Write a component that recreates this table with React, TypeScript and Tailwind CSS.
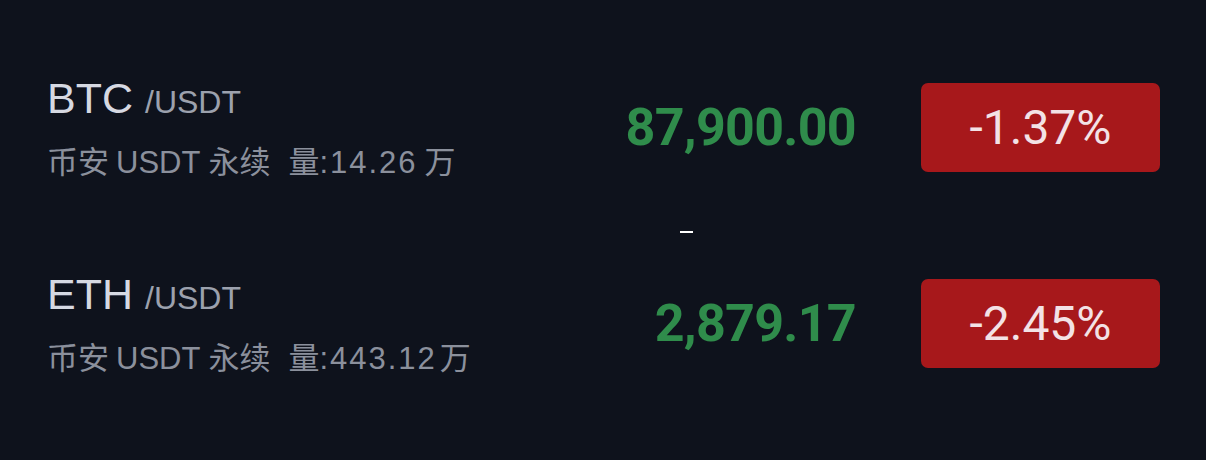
import React from "react";

type Ticker = {
  base: string;
  volume: string;
  unitGap: string;
  price: string;
  change: string;
};

const tickers: Ticker[] = [
  { base: "BTC", volume: "14.26", unitGap: "ml-[7px]", price: "87,900.00", change: "-1.37%" },
  { base: "ETH", volume: "443.12", unitGap: "ml-[3px]", price: "2,879.17", change: "-2.45%" },
];

const sans = "font-['Liberation_Sans','Noto_Sans_CJK_SC',sans-serif]";
const roboto = "font-['Roboto','Liberation_Sans',sans-serif]";

function TickerRow({ t }: { t: Ticker }) {
  return (
    <div className="flex items-center h-[101px]">
      {/* Pair + market info */}
      <div className={`flex flex-col ${sans}`}>
        <div className="flex items-baseline h-[43px]">
          <span className="text-[43px] leading-[43px] text-[#d6d9e2]">{t.base}</span>
          <span className="ml-[12px] text-[32px] leading-[30px] text-[#9ca1ad]">/USDT</span>
        </div>
        <div className="mt-[28px] h-[30px] flex items-baseline text-[31px] leading-[30px] text-[#8b909c] whitespace-nowrap">
          <span>币安</span>
          <span className="ml-[7px]">USDT</span>
          <span className="ml-[8px]">永续</span>
          <span className="ml-[18px]">量</span>
          <span className="tracking-[2px]">:{t.volume}</span>
          <span className={t.unitGap}>万</span>
        </div>
      </div>

      <div className="flex-1" />

      <span className={`${roboto} text-[52px] leading-none font-bold tracking-[-0.7px] text-[#2f8c4b]`}>
        {t.price}
      </span>

      <div
        className={`ml-[65px] w-[239px] h-[89px] rounded-[7px] bg-[#a7181b] flex items-center justify-center ${roboto} text-[48px] leading-none text-[#f3e2e6]`}
      >
        {t.change}
      </div>
    </div>
  );
}

export default function App() {
  return (
    <div className="w-[1206px] h-[460px] bg-[#0e121c] pl-[47px] pr-[46px] pt-[77px] overflow-hidden">
      <TickerRow t={tickers[0]} />
      <div className="h-[95px] pt-[53px] pl-[633px]">
        <div className="w-[13px] h-[2px] bg-white" />
      </div>
      <TickerRow t={tickers[1]} />
    </div>
  );
}
